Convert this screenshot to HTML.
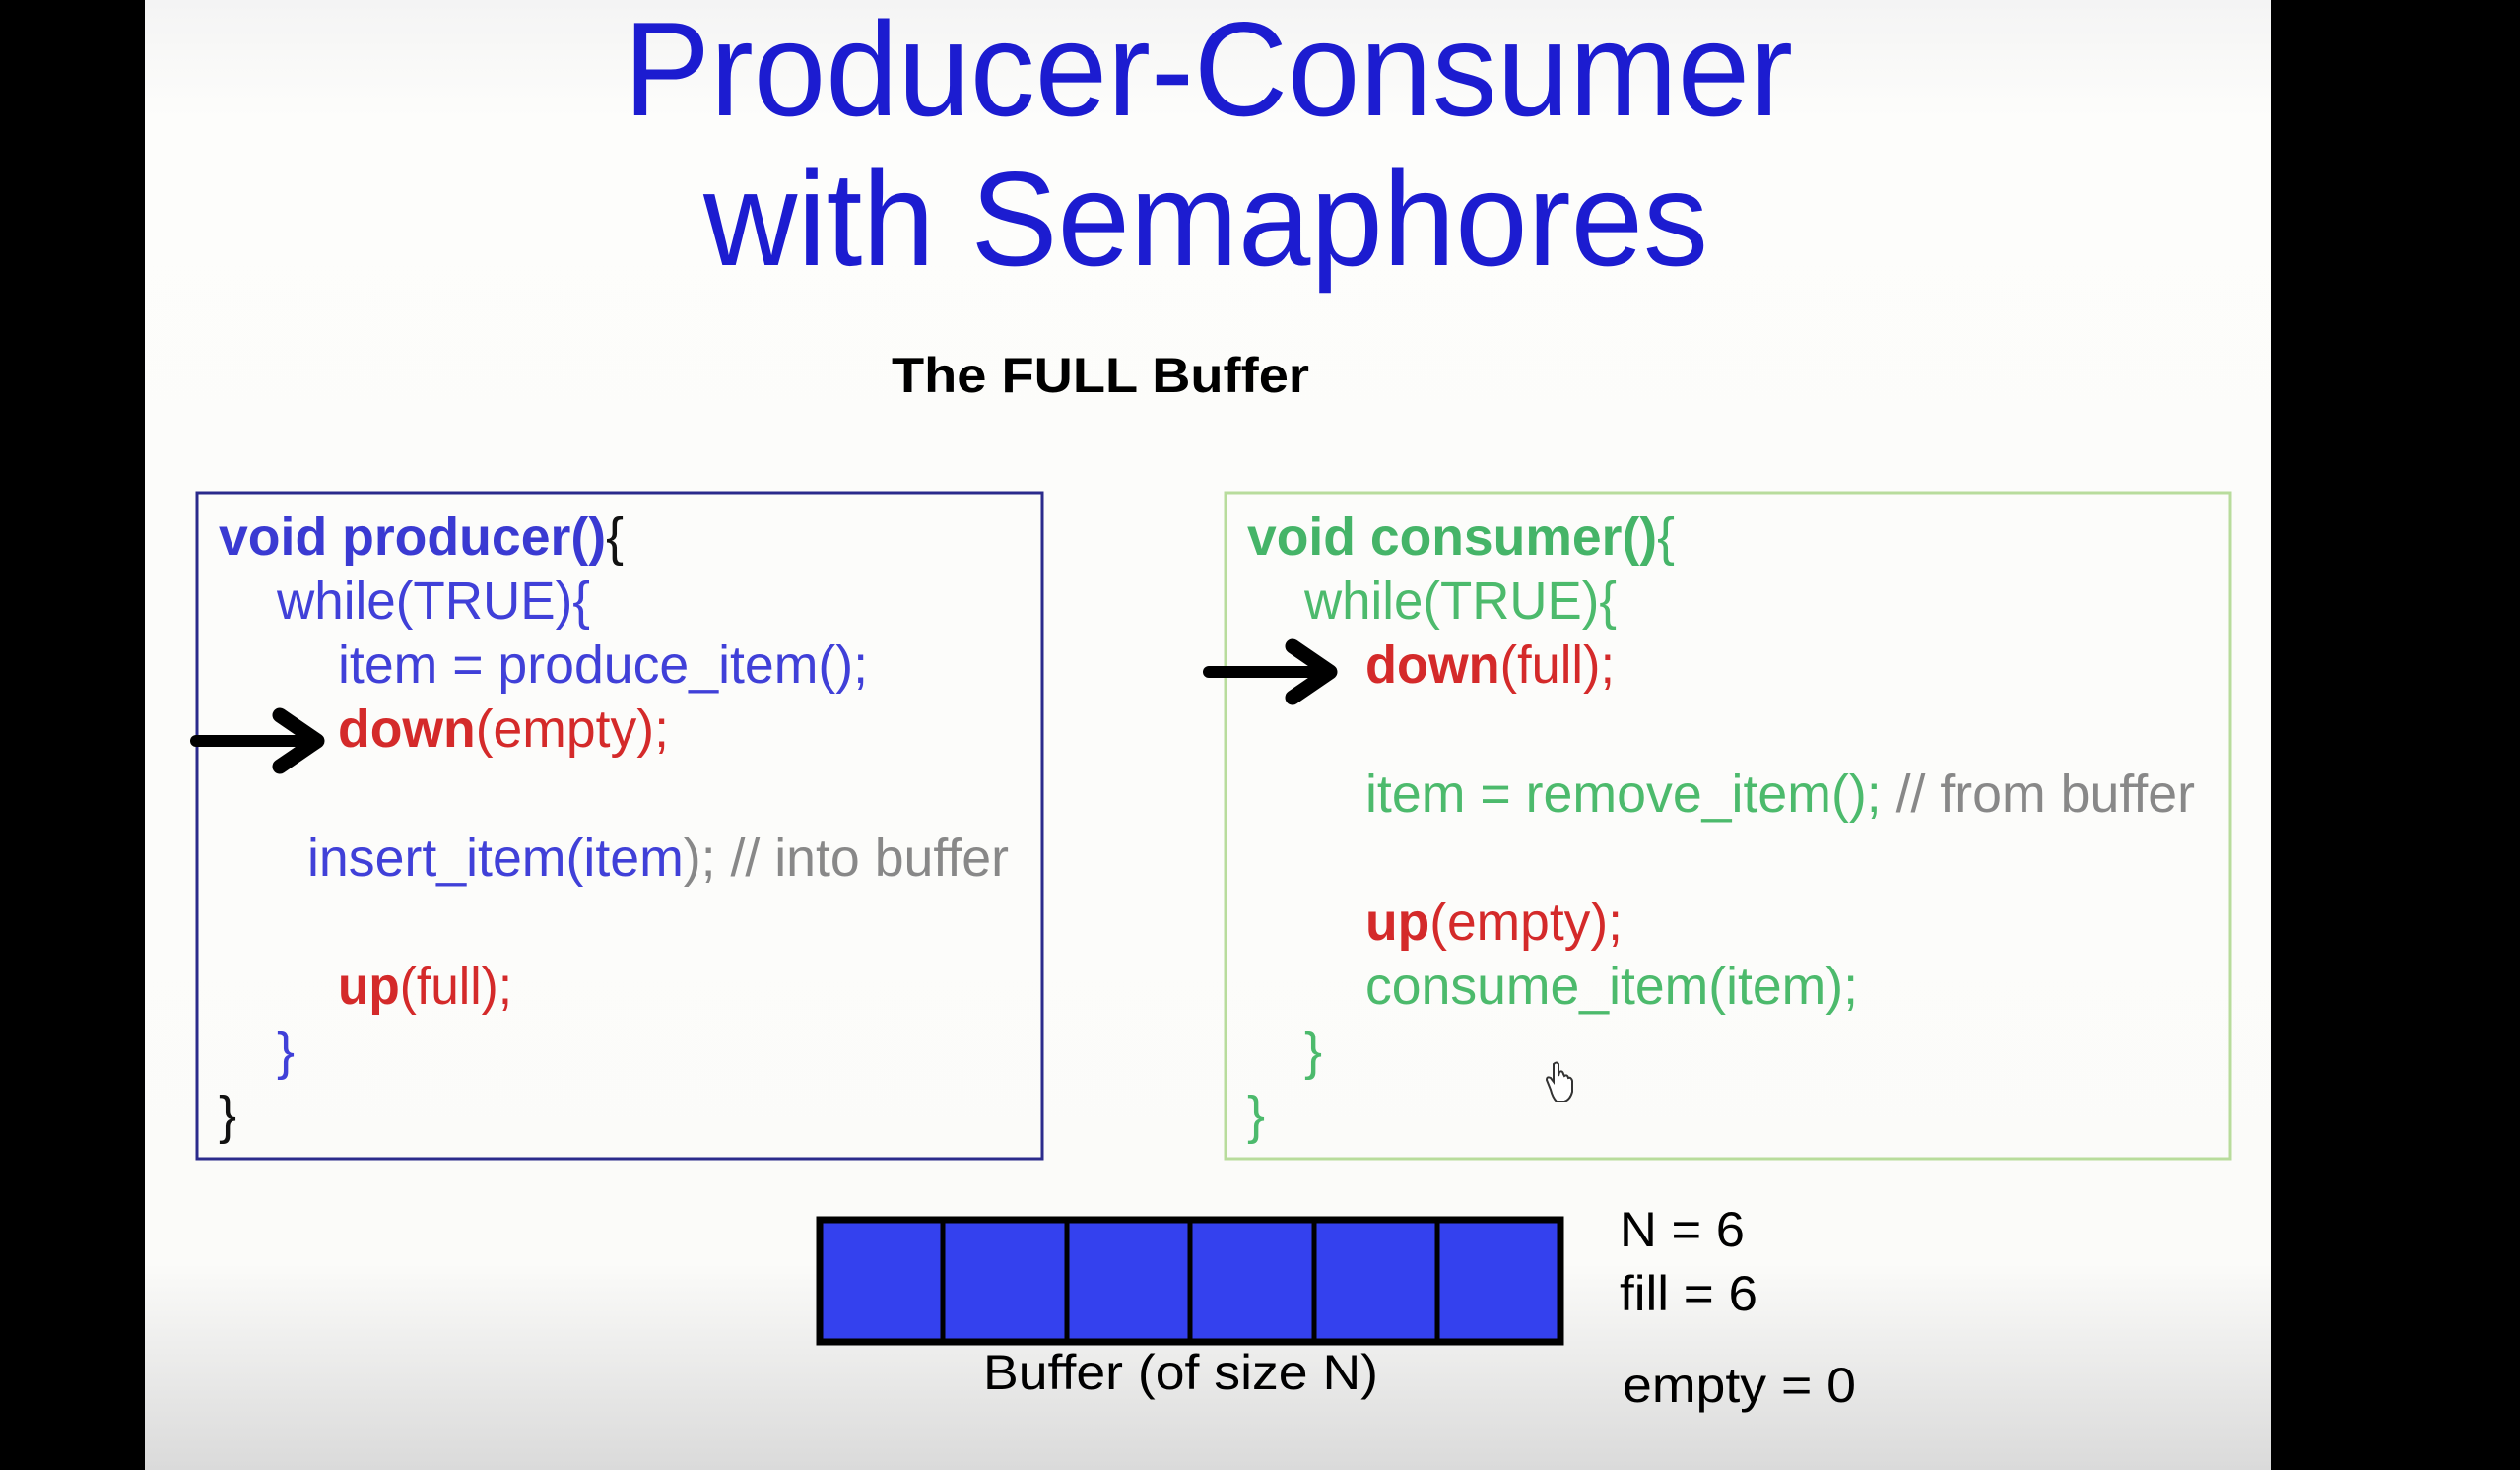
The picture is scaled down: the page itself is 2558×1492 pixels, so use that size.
<!DOCTYPE html>
<html><head><meta charset="utf-8"><style>html,body{margin:0;padding:0;background:#000;overflow:hidden}svg{display:block}</style></head>
<body>
<svg width="2558" height="1492" viewBox="0 0 2558 1492" xmlns="http://www.w3.org/2000/svg" font-family="Liberation Sans, Arial, sans-serif">
<defs>
<linearGradient id="bg" x1="0" y1="0" x2="0" y2="1">
<stop offset="0" stop-color="#f4f4f4"/>
<stop offset="0.08" stop-color="#fdfdfb"/>
<stop offset="0.86" stop-color="#fbfbf9"/>
<stop offset="1" stop-color="#dadada"/>
</linearGradient>
</defs>
<rect x="0" y="0" width="2558" height="1492" fill="#000"/>
<rect x="147" y="0" width="2158" height="1492" fill="url(#bg)"/>

<text x="633" y="117" font-size="136" fill="#1c1cd0" textLength="1187" lengthAdjust="spacingAndGlyphs">Producer-Consumer</text>
<text x="714" y="269" font-size="136" fill="#1c1cd0" textLength="1020" lengthAdjust="spacingAndGlyphs">with Semaphores</text>
<text x="905" y="398" font-size="50" font-weight="bold" fill="#000" textLength="424" lengthAdjust="spacingAndGlyphs">The FULL Buffer</text>

<rect x="200" y="500" width="858" height="676" fill="none" stroke="#2b2b8c" stroke-width="3"/>
<rect x="1244" y="500" width="1020" height="676" fill="none" stroke="#b8dc9c" stroke-width="3"/>

<g font-size="54">
<text x="222" y="563" textLength="411" lengthAdjust="spacingAndGlyphs"><tspan fill="#3a3ad2" font-weight="bold">void producer()</tspan><tspan fill="#111">{</tspan></text>
<text x="281" y="628" fill="#4040d8" textLength="318" lengthAdjust="spacingAndGlyphs">while(TRUE){</text>
<text x="343" y="693" fill="#4040d8" textLength="538" lengthAdjust="spacingAndGlyphs">item = produce_item();</text>
<text x="343" y="758" fill="#d42a2a" textLength="336" lengthAdjust="spacingAndGlyphs"><tspan font-weight="bold">down</tspan>(empty);</text>
<text x="312" y="889" textLength="712" lengthAdjust="spacingAndGlyphs"><tspan fill="#4040d8">insert_item(item</tspan><tspan fill="#888">); // into buffer</tspan></text>
<text x="343" y="1019" fill="#d42a2a" textLength="177" lengthAdjust="spacingAndGlyphs"><tspan font-weight="bold">up</tspan>(full);</text>
<text x="281" y="1085" fill="#4040d8">}</text>
<text x="222" y="1150" fill="#111">}</text>

<text x="1266" y="563" textLength="434" lengthAdjust="spacingAndGlyphs"><tspan fill="#45b468" font-weight="bold">void consumer()</tspan><tspan fill="#45b468">{</tspan></text>
<text x="1324" y="628" fill="#4cba6c" textLength="317" lengthAdjust="spacingAndGlyphs">while(TRUE){</text>
<text x="1386" y="693" fill="#d42a2a" textLength="253" lengthAdjust="spacingAndGlyphs"><tspan font-weight="bold">down</tspan>(full);</text>
<text x="1386" y="824" textLength="842" lengthAdjust="spacingAndGlyphs"><tspan fill="#4cba6c">item = remove_item(); </tspan><tspan fill="#888">// from buffer</tspan></text>
<text x="1386" y="954" fill="#d42a2a" textLength="261" lengthAdjust="spacingAndGlyphs"><tspan font-weight="bold">up</tspan>(empty);</text>
<text x="1386" y="1019" fill="#4cba6c" textLength="500" lengthAdjust="spacingAndGlyphs">consume_item(item);</text>
<text x="1324" y="1085" fill="#4cba6c">}</text>
<text x="1266" y="1150" fill="#4cba6c">}</text>
</g>

<g stroke="#000" fill="none" stroke-linecap="round" stroke-linejoin="round">
<line x1="199" y1="752" x2="318" y2="752" stroke-width="12"/>
<polyline points="284,726 322,752 284,778" stroke-width="15"/>
<line x1="1227" y1="682" x2="1346" y2="682" stroke-width="12"/>
<polyline points="1312,656 1350,682 1312,708" stroke-width="15"/>
</g>

<g>
<rect x="832" y="1238" width="752" height="124" fill="#3441ee" stroke="#000" stroke-width="7"/>
<g stroke="#000" stroke-width="5">
<line x1="957" y1="1238" x2="957" y2="1362"/>
<line x1="1083" y1="1238" x2="1083" y2="1362"/>
<line x1="1208" y1="1238" x2="1208" y2="1362"/>
<line x1="1334" y1="1238" x2="1334" y2="1362"/>
<line x1="1459" y1="1238" x2="1459" y2="1362"/>
</g>
</g>
<g font-size="50" fill="#000">
<text x="998" y="1410" textLength="401" lengthAdjust="spacingAndGlyphs">Buffer (of size N)</text>
<text x="1644" y="1265" textLength="127" lengthAdjust="spacingAndGlyphs">N = 6</text>
<text x="1644" y="1330" textLength="140" lengthAdjust="spacingAndGlyphs">fill = 6</text>
<text x="1647" y="1423" textLength="237" lengthAdjust="spacingAndGlyphs">empty = 0</text>
</g>

<g transform="translate(1568,1078)" stroke="#333" stroke-width="2" fill="#fff">
<path d="M6 28 L2 18 Q2 14 6 16 L9 20 L9 2 Q12 -1 14 2 L14 14 L15 10 Q18 8 19 12 L20 14 Q23 12 24 16 Q27 15 28 19 L28 30 Q26 38 20 40 L12 40 Q8 36 6 28 Z"/>
</g>
</svg>
</body></html>
